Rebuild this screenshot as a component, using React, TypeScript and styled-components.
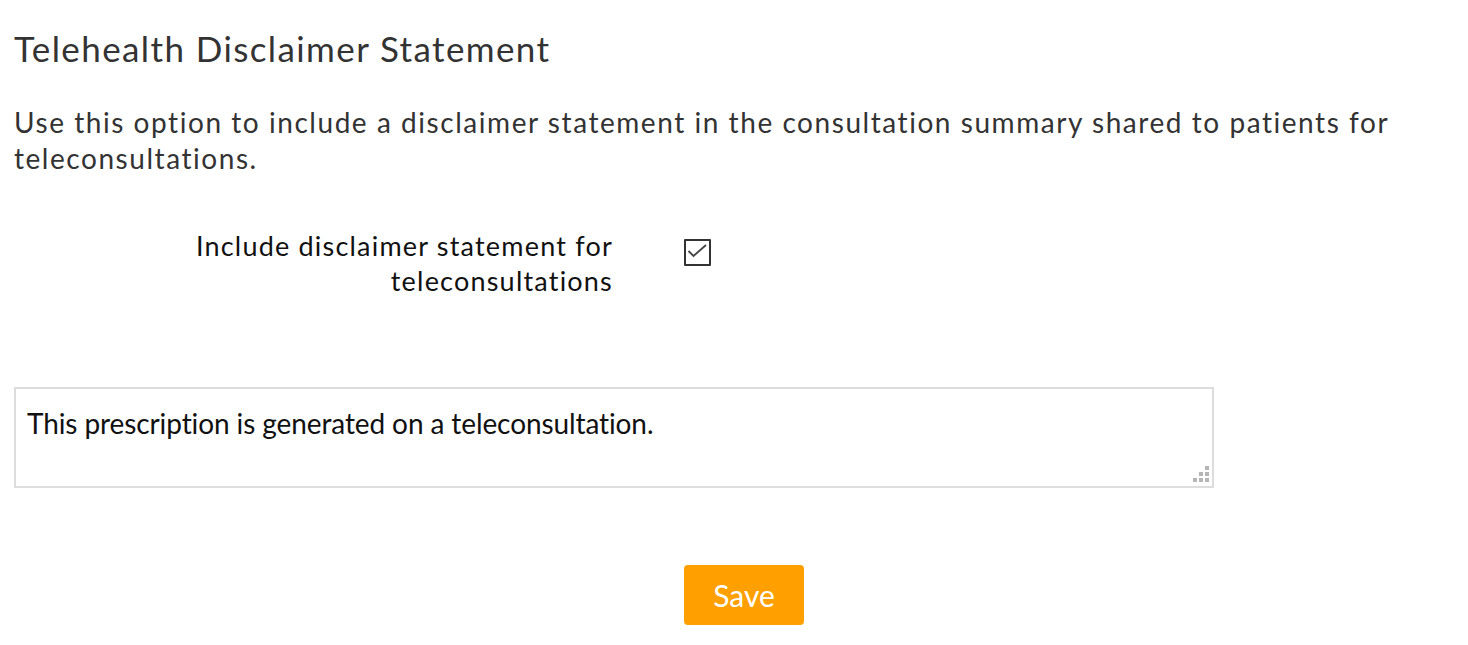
import React, { useState } from 'react';
import styled, { createGlobalStyle } from 'styled-components';

const GlobalStyle = createGlobalStyle`
  body {
    margin: 0;
    background: #ffffff;
    font-family: Lato, "Open Sans", sans-serif;
  }
`;

const Page = styled.div`
  display: flex;
  flex-direction: column;
  padding: 0 14px;
`;

const Title = styled.h2`
  color: #333333;
  font-size: 35px;
  font-weight: 400;
  letter-spacing: 1.4px;
  line-height: 40px;
  margin: 28px 0 0;
`;

const Description = styled.p`
  color: #333333;
  font-size: 28px;
  letter-spacing: 1.55px;
  line-height: 36px;
  margin: 36px 0 0;
  max-width: 1400px;
`;

const FormRow = styled.div`
  align-items: flex-start;
  display: grid;
  grid-template-columns: 670px 1fr;
  margin-top: 52px;
`;

const Label = styled.label`
  color: #111111;
  font-size: 27px;
  letter-spacing: 1.2px;
  line-height: 35px;
  padding: 0 71px 0 160px;
  text-align: right;
`;

const CheckBox = styled.button<{ $checked: boolean }>`
  background: #ffffff;
  border: 2px solid #333333;
  border-radius: 1px;
  box-sizing: border-box;
  cursor: pointer;
  display: block;
  height: 27px;
  margin-top: 11px;
  padding: 0;
  width: 27px;

  svg {
    display: block;
    visibility: ${(props) => (props.$checked ? 'visible' : 'hidden')};
  }
`;

const TextAreaWrap = styled.div`
  margin-top: 89px;
  position: relative;
  width: 1200px;
`;

const TextArea = styled.textarea`
  border: 2px solid #dddddd;
  box-sizing: border-box;
  color: #111111;
  display: block;
  font-family: Lato, "Open Sans", sans-serif;
  font-size: 28px;
  height: 101px;
  letter-spacing: -0.1px;
  line-height: 34px;
  outline: none;
  padding: 17px 11px;
  resize: none;
  width: 100%;
`;

const Grip = styled.svg`
  bottom: 6px;
  position: absolute;
  right: 5px;
`;

const Actions = styled.div`
  display: grid;
  grid-template-columns: 670px 1fr;
  margin-top: 77px;
`;

const SaveButton = styled.button`
  background: #ffa000;
  border: none;
  border-radius: 4px;
  color: #ffffff;
  cursor: pointer;
  font-family: Lato, "Open Sans", sans-serif;
  font-size: 30px;
  grid-column: 2;
  height: 60px;
  justify-self: start;
  padding: 0;
  width: 120px;
`;

export default function App() {
  const [checked, setChecked] = useState(true);
  const [text, setText] = useState('This prescription is generated on a teleconsultation.');

  return (
    <Page>
      <GlobalStyle />
      <Title>Telehealth Disclaimer Statement</Title>
      <Description>
        Use this option to include a disclaimer statement in the consultation summary shared to patients for
        teleconsultations.
      </Description>
      <FormRow>
        <Label>Include disclaimer statement for teleconsultations</Label>
        <CheckBox $checked={checked} onClick={() => setChecked(!checked)} aria-label="toggle">
          <svg width="23" height="23" viewBox="0 0 23 23">
            <path d="M2.5 10 L7.5 15 L20 4" fill="none" stroke="#444" strokeWidth="1.8" />
          </svg>
        </CheckBox>
      </FormRow>
      <TextAreaWrap>
        <TextArea value={text} onChange={(e) => setText(e.target.value)} />
        <Grip width="16" height="16" viewBox="0 0 16 16">
          <rect x="12" y="0" width="4" height="4" fill="#b5b5b5" />
          <rect x="6" y="6" width="4" height="4" fill="#b5b5b5" />
          <rect x="12" y="6" width="4" height="4" fill="#b5b5b5" />
          <rect x="0" y="12" width="4" height="4" fill="#b5b5b5" />
          <rect x="6" y="12" width="4" height="4" fill="#b5b5b5" />
          <rect x="12" y="12" width="4" height="4" fill="#b5b5b5" />
        </Grip>
      </TextAreaWrap>
      <Actions>
        <SaveButton>Save</SaveButton>
      </Actions>
    </Page>
  );
}
